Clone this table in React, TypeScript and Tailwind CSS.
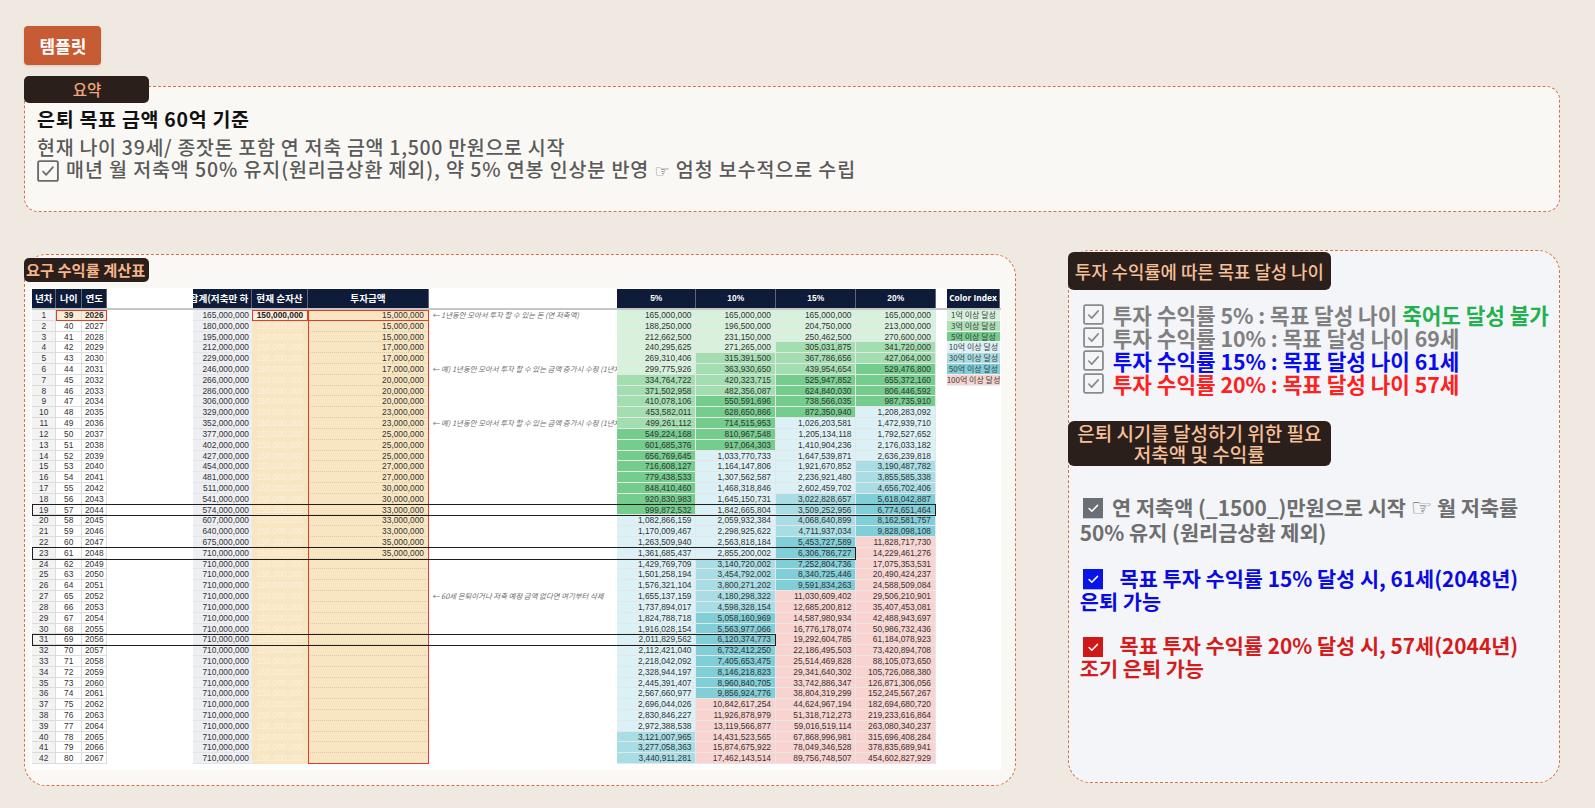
import React from 'react';

const INV = [15, 15, 15, 17, 17, 17, 20, 20, 20, 23, 23, 25, 25, 25, 27, 27, 30, 30, 33, 33, 33, 35, 35].map(
  (v) => v * 1000000,
);
const RATES = [5, 10, 15, 20];
const RATE_W = ['w-[79.5px]', 'w-[79.5px]', 'w-[80.5px]', 'w-[79.5px]'];

const NOTES: Record<number, string> = {
  0: '← 1년동안 모아서 투자 할 수 있는 돈 (연 저축액)',
  5: '← 예) 1년동안 모아서 투자 할 수 있는 금액 증가시 수정 (1년차 기준)',
  10: '← 예) 1년동안 모아서 투자 할 수 있는 금액 증가시 수정 (1년차 기준)',
  26: '← 60세 은퇴이거나 저축 예정 금액 없다면 여기부터 삭제',
};

const COLOR_INDEX = [
  ['1억 이상 달성', 'bg-[#d7f1dd]'],
  ['3억 이상 달성', 'bg-[#ade1b8]'],
  ['5억 이상 달성', 'bg-[#74cd8c]'],
  ['10억 이상 달성', 'bg-[#dcf1f5]'],
  ['30억 이상 달성', 'bg-[#a8dde5]'],
  ['50억 이상 달성', 'bg-[#80ced8]'],
  ['100억 이상 달성', 'bg-[#f9d3d0]'],
];

function cellBg(v: number) {
  if (v >= 1e10) return 'bg-[#f9d3d0]';
  if (v >= 5e9) return 'bg-[#80ced8]';
  if (v >= 3e9) return 'bg-[#a8dde5]';
  if (v >= 1e9) return 'bg-[#dcf1f5]';
  if (v >= 5e8) return 'bg-[#74cd8c]';
  if (v >= 3e8) return 'bg-[#a3deb0]';
  if (v >= 1e8) return 'bg-[#d7f1dd]';
  return 'bg-white';
}

const fmt = (v: number) => v.toLocaleString('en-US');

function buildRows() {
  const rows: { inv: number; sum: number; vals: number[] }[] = [];
  let sum = 150000000;
  let prev = [0, 0, 0, 0];
  for (let i = 0; i < 42; i++) {
    const inv = INV[i] ?? 0;
    sum += inv;
    const vals = RATES.map((p, k) => (i === 0 ? 150000000 + inv : Math.round((prev[k] * (100 + p)) / 100) + inv));
    rows.push({ inv, sum, vals });
    prev = vals;
  }
  return rows;
}

function CheckOutline({ className }: { className?: string }) {
  return (
    <svg viewBox="0 0 20 20" className={className} fill="none">
      <rect x="1" y="1" width="18" height="18" rx="1.5" stroke="currentColor" strokeWidth="1.7" />
      <path d="M5.5 10.5l2.8 3L14.5 6.5" stroke="currentColor" strokeWidth="1.6" strokeLinecap="round" strokeLinejoin="round" />
    </svg>
  );
}

function CheckFilled({ className }: { className?: string }) {
  return (
    <svg viewBox="0 0 20 20" className={className}>
      <rect width="20" height="20" fill="currentColor" />
      <path d="M6 10.3l2.7 2.7L14.3 7.3" stroke="white" strokeWidth="1.5" fill="none" strokeLinecap="round" strokeLinejoin="round" />
    </svg>
  );
}

function Sheet() {
  const rows = buildRows();
  const head = 'bg-[#0e1c3a] text-white font-bold flex items-center justify-center border-r border-[#5d6678]';
  return (
    <div className="w-[971.5px] h-[482px] bg-white pl-[2px] pt-[1px] font-['Liberation_Sans','Noto_Sans_CJK_KR',sans-serif] text-[8.4px] text-[#333]">
      {/* header */}
      <div className="flex h-[21.3px] border-b-2 border-[#c6c6c6] font-['Noto_Sans_CJK_KR',sans-serif] text-[9.6px]">
        <div className={`w-[24.5px] ${head}`}>년차</div>
        <div className={`w-[25.5px] ${head}`}>나이</div>
        <div className={`w-[25.5px] ${head}`}>연도</div>
        <div className="w-[85.5px]" />
        <div className={`w-[59px] ${head} overflow-hidden whitespace-nowrap`}>
          <span className="-ml-[6px]">합계(저축만 하</span>
        </div>
        <div className={`w-[56px] ${head} whitespace-nowrap`}>현재 순자산</div>
        <div className={`w-[121px] ${head}`}>투자금액</div>
        <div className="w-[188px]" />
        {RATES.map((p, k) => (
          <div key={p} className={`${RATE_W[k]} ${head} font-['Liberation_Sans',sans-serif] text-[8.4px]`}>
            {p}%
          </div>
        ))}
        <div className="w-[11px]" />
        <div className={`w-[53px] ${head} font-['Open_Sans',sans-serif] text-[8.4px] whitespace-nowrap`}>Color Index</div>
      </div>

      {/* body */}
      <div className="relative">
        {rows.map((r, i) => (
          <div key={i} className="flex h-[10.82px] leading-[10.2px]">
            <div className="w-[24.5px] text-center bg-[#f3f3f3] border-r border-b border-[#dcdcdc]">{i + 1}</div>
            <div
              className={`w-[25.5px] text-center border-r border-b border-[#dcdcdc] ${
                i === 0 ? 'bg-[#fbecd6] font-bold' : 'bg-white'
              }`}
            >
              {39 + i}
            </div>
            <div
              className={`w-[25.5px] text-center border-r border-b border-[#dcdcdc] ${
                i === 0 ? 'bg-[#fbecd6] font-bold' : 'bg-white'
              }`}
            >
              {2026 + i}
            </div>
            <div className="w-[85.5px]" />
            <div className="w-[59px] text-right pr-[3px] bg-[#edeff3] border-b border-[#e3e5e9]">{fmt(r.sum)}</div>
            <div
              className={`w-[56px] text-center ${
                i === 0 ? 'bg-[#fbf0dd] font-bold text-[#222]' : 'bg-[#f8e6c2] text-[#fcf1de]'
              }`}
            >
              150,000,000
            </div>
            <div className="w-[121px] text-right pr-[5px] bg-[#f8e6c2] border-b border-dotted border-[#dccaa6]">
              {r.inv ? fmt(r.inv) : ''}
            </div>
            <div className="w-[188px] overflow-hidden whitespace-nowrap italic text-[7.4px] text-[#6e6e6e] pl-[3px] font-['Noto_Sans_CJK_KR',sans-serif]">
              {NOTES[i] ?? ''}
            </div>
            {r.vals.map((v, k) => (
              <div key={k} className={`${RATE_W[k]} text-right pr-[4px] border-r border-b border-[#e6e6e6] ${cellBg(v)}`}>
                {fmt(v)}
              </div>
            ))}
            <div className="w-[11px]" />
            <div
              className={`w-[53px] whitespace-nowrap flex justify-center overflow-visible text-[8px] text-[#3d3d3d] font-['Noto_Sans_CJK_KR',sans-serif] ${
                COLOR_INDEX[i] ? `${COLOR_INDEX[i][1]} border-b border-[#eeeeee]` : ''
              }`}
            >
              {COLOR_INDEX[i] ? COLOR_INDEX[i][0] : ''}
            </div>
          </div>
        ))}

        {/* red marks */}
        <div className="absolute top-0 left-[24.5px] w-[51px] h-[11.3px] border-[1.5px] border-[#e23a2e]" />
        <div className="absolute top-0 left-[220px] w-[56px] h-[11.3px] border-[1.5px] border-[#e23a2e]" />
        <div className="absolute top-0 left-[276px] w-[121px] h-[454.5px] border-[1.5px] border-[#e23a2e]" />
        <div className="absolute top-0 left-[276px] w-[121px] h-[11.3px] border-b-[1.5px] border-[#e23a2e]" />

        {/* target rows */}
        <div className="absolute top-[194px] left-0 w-[904px] h-[12.3px] border-[1.5px] border-[#1e1e1e]" />
        <div className="absolute top-[237.3px] left-0 w-[824.5px] h-[12.3px] border-[1.5px] border-[#1e1e1e]" />
        <div className="absolute top-[323.8px] left-0 w-[744px] h-[12.3px] border-[1.5px] border-[#1e1e1e]" />
      </div>
    </div>
  );
}

export default function App() {
  return (
    <div className="min-h-screen bg-[#f0e9e2] pt-[26.4px] pl-[24.4px] font-['Noto_Sans_CJK_KR','Noto_Sans',sans-serif]">
      <div className="w-[77px] h-[39px] rounded-[4px] bg-[#c75b33] text-white font-bold text-[17px] flex items-center justify-center shadow-sm">
        템플릿
      </div>

      {/* summary */}
      <div className="mt-[10.2px] w-[1536px]">
        <div className="relative z-10 w-[125px] h-[27.5px] rounded-[5px] bg-[#2a1f1b] text-[#f3a77c] text-[15.5px] font-medium flex items-center justify-center">
          요약
        </div>
        <div className="-mt-[17.4px] h-[126.2px] rounded-[14px] border-[1.5px] border-dashed border-[#d9703f] bg-[#faf8f5] pl-[11.7px] pt-[19px] tracking-[0.7px]">
          <div className="text-[19.5px] leading-[26px] font-bold text-[#111]">은퇴 목표 금액 60억 기준</div>
          <div className="mt-[4.3px] text-[19.5px] leading-[22.4px] font-medium text-[#5a5a5a]">
            현재 나이 39세/ 종잣돈 포함 연 저축 금액 1,500 만원으로 시작
          </div>
          <div className="flex items-center gap-[7px] text-[19.5px] leading-[22.4px] font-medium text-[#5a5a5a]">
            <CheckOutline className="w-[22px] h-[22px] text-[#6b6b6b]" />
            <span className="tracking-[0.9px]">
              매년 월 저축액 50% 유지(원리금상환 제외), 약 5% 연봉 인상분 반영{' '}
              <span className="font-['DejaVu_Sans'] text-[17px]">☞</span> 엄청 보수적으로 수립
            </span>
          </div>
        </div>
      </div>

      {/* lower */}
      <div className="mt-[38.6px] flex items-start gap-[51.9px]">
        <div className="mt-[3.1px] w-[991.8px] h-[532px] rounded-[22px] border-[1.5px] border-dashed border-[#d9703f] bg-[#faf8f5]">
          <div className="mt-[3.6px] -ml-[1.5px] w-[125px] h-[23.4px] rounded-[5px] bg-[#2a1f1b] text-[#f4b48c] text-[15.3px] font-bold leading-[23.4px] px-[2px] whitespace-nowrap overflow-hidden">
            요구 수익률 계산표
          </div>
          <div className="mt-[6.1px] ml-[4.6px]">
            <Sheet />
          </div>
        </div>

        <div className="w-[491.9px] h-[533px] rounded-[22px] border-[1.5px] border-dashed border-[#d9703f] bg-[#f3f5f9]">
          <div className="mt-[0.6px] -ml-[1.5px] w-[263.5px] h-[37.6px] rounded-[6px] bg-[#2a1f1b] text-[#f5bf9a] text-[17.8px] font-medium flex items-center justify-center whitespace-nowrap">
            투자 수익률에 따른 목표 달성 나이
          </div>

          <div className="mt-[12.9px] ml-[13.7px] text-[21.3px] font-bold leading-[23.1px] whitespace-nowrap">
            <div className="flex items-center gap-[9px] text-[#808080]">
              <CheckOutline className="w-[21px] h-[21px] text-[#8a8a8a]" />
              <span>
                투자 수익률 5% : 목표 달성 나이 <span className="text-[#22b14c]">죽어도 달성 불가</span>
              </span>
            </div>
            <div className="flex items-center gap-[9px] text-[#808080]">
              <CheckOutline className="w-[21px] h-[21px] text-[#8a8a8a]" />
              <span>투자 수익률 10% : 목표 달성 나이 69세</span>
            </div>
            <div className="flex items-center gap-[9px] text-[#0a0aef]">
              <CheckOutline className="w-[21px] h-[21px] text-[#8a8a8a]" />
              <span>투자 수익률 15% : 목표 달성 나이 61세</span>
            </div>
            <div className="flex items-center gap-[9px] text-[#ff2020]">
              <CheckOutline className="w-[21px] h-[21px] text-[#8a8a8a]" />
              <span>투자 수익률 20% : 목표 달성 나이 57세</span>
            </div>
          </div>

          <div className="mt-[25.9px] -ml-[1.5px] w-[263.5px] h-[44.8px] rounded-[6px] bg-[#2a1f1b] text-[#f5bf9a] text-[19px] font-medium leading-[21.4px] flex flex-col items-center justify-center whitespace-nowrap">
            <span>은퇴 시기를 달성하기 위한 필요</span>
            <span>저축액 및 수익률</span>
          </div>

          <div className="pl-[10.7px] pr-[12px] text-[20.8px] font-bold break-keep">
            <p className="mt-[29px] leading-[24px] text-[#6e6e6e]">
              <CheckFilled className="inline-block align-[-3px] w-[20.3px] h-[20.3px] ml-[3px] mr-[9px] text-[#6a6e75]" />
              연 저축액 (_1500_)만원으로 시작{' '}
              <span className="font-['DejaVu_Sans'] font-normal text-[24px]">☞</span> 월 저축률 50% 유지 (원리금상환 제외)
            </p>
            <p className="mt-[23px] leading-[22.6px] text-[#0b0bdf]">
              <CheckFilled className="inline-block align-[-3px] w-[20.3px] h-[20.3px] ml-[3px] mr-[16.5px] text-[#0a14e6]" />
              목표 투자 수익률 15% 달성 시, 61세(2048년) 은퇴 가능
            </p>
            <p className="mt-[22px] leading-[22.6px] text-[#d41c1c]">
              <CheckFilled className="inline-block align-[-3px] w-[20.3px] h-[20.3px] ml-[3px] mr-[16.5px] text-[#d01818]" />
              목표 투자 수익률 20% 달성 시, 57세(2044년) 조기 은퇴 가능
            </p>
          </div>
        </div>
      </div>
    </div>
  );
}
